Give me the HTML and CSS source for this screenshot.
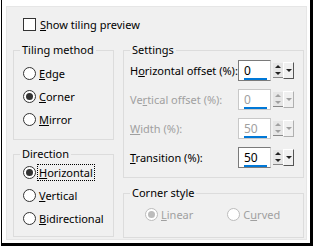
FILE: index.html
```html
<!DOCTYPE html>
<html lang="en">
<head>
    <meta charset="UTF-8">
    <title>Tiling</title>
    <link rel="stylesheet" href="styles.css">
</head>
<body>
    <div class="frame">
        <div class="panel">
            <label class="check-row">
                <span class="checkbox"></span>
                <span><u>S</u>how tiling preview</span>
            </label>

            <div class="columns">
                <div class="col">
                    <fieldset class="group">
                        <legend>Tiling method</legend>
                        <div class="group-body tiling">
                            <label class="radio-row"><span class="radio"></span><span><u>E</u>dge</span></label>
                            <label class="radio-row"><span class="radio checked"></span><span><u>C</u>orner</span></label>
                            <label class="radio-row"><span class="radio"></span><span><u>M</u>irror</span></label>
                        </div>
                    </fieldset>

                    <fieldset class="group direction">
                        <legend>Direction</legend>
                        <div class="group-body">
                            <label class="radio-row"><span class="radio checked"></span><span class="focus"><u>H</u>orizontal</span></label>
                            <label class="radio-row"><span class="radio"></span><span><u>V</u>ertical</span></label>
                            <label class="radio-row"><span class="radio"></span><span><u>B</u>idirectional</span></label>
                        </div>
                    </fieldset>
                </div>

                <div class="col">
                    <fieldset class="group">
                        <legend>Settings</legend>
                        <div class="group-body settings">
                            <div class="field-row">
                                <span class="field-label">H<u>o</u>rizontal offset (%):</span>
                                <div class="spin">
                                    <div class="spin-edit"><span>0</span></div>
                                    <div class="spin-arrows"><span class="up"></span><span class="down"></span></div>
                                    <div class="spin-drop"><span></span></div>
                                </div>
                            </div>
                            <div class="field-row disabled">
                                <span class="field-label">Ve<u>r</u>tical offset (%):</span>
                                <div class="spin">
                                    <div class="spin-edit"><span>0</span></div>
                                    <div class="spin-arrows"><span class="up"></span><span class="down"></span></div>
                                    <div class="spin-drop"><span></span></div>
                                </div>
                            </div>
                            <div class="field-row disabled">
                                <span class="field-label"><u>W</u>idth (%):</span>
                                <div class="spin">
                                    <div class="spin-edit"><span>50</span></div>
                                    <div class="spin-arrows"><span class="up"></span><span class="down"></span></div>
                                    <div class="spin-drop"><span></span></div>
                                </div>
                            </div>
                            <div class="field-row">
                                <span class="field-label"><u>T</u>ransition (%):</span>
                                <div class="spin">
                                    <div class="spin-edit"><span>50</span></div>
                                    <div class="spin-arrows"><span class="up"></span><span class="down"></span></div>
                                    <div class="spin-drop"><span></span></div>
                                </div>
                            </div>
                        </div>
                    </fieldset>

                    <fieldset class="group corner">
                        <legend>Corner style</legend>
                        <div class="group-body corner-row disabled">
                            <label class="radio-row linear"><span class="radio checked"></span><span><u>L</u>inear</span></label>
                            <label class="radio-row"><span class="radio"></span><span>C<u>u</u>rved</span></label>
                        </div>
                    </fieldset>
                </div>
            </div>
        </div>
    </div>
</body>
</html>
```

FILE: styles.css
```css
* {
    box-sizing: border-box;
}
body {
    margin: 0;
    background: #ffffff;
    font-family: "Noto Sans", "Open Sans", sans-serif;
    font-size: 11px;
    color: #000;
}
.frame {
    width: 312px;
    height: 246px;
    margin-left: 1px;
    border-left: 1px solid #000;
    border-right: 3px solid #000;
    border-bottom: 3px solid #000;
    padding: 6px 3px 3px 4px;
}
.panel {
    width: 301px;
    height: 234px;
    background: #f0f0f0;
    border: 1px solid #e6e6e6;
    padding: 0 0 0 6px;
}
u {
    text-decoration: underline;
    text-underline-offset: 1px;
}

/* checkbox */
.check-row {
    display: flex;
    align-items: center;
    gap: 4px;
    height: 15px;
    margin: 10px 0 0 10px;
    line-height: 15px;
}
.checkbox {
    width: 13px;
    height: 13px;
    border: 1px solid #333;
    background: #fff;
}

/* layout */
.columns {
    display: grid;
    grid-template-columns: 101px 181px;
    column-gap: 9px;
    margin-top: 11px;
}
.col {
    display: flex;
    flex-direction: column;
}

/* group boxes */
.group {
    margin: 0;
    border: 1px solid #dcdcdc;
    padding: 0;
    min-width: 0;
}
.group legend {
    margin-left: 6px;
    padding: 0 2px;
    line-height: 14px;
}
.group-body {
    padding: 0 0 6px 9px;
}
.tiling {
    padding: 5px 0 8px 9px;
}
.direction {
    margin-top: 7px;
}
.settings {
    padding: 3px 9px 9px 6px;
}
.corner {
    margin-top: 8px;
}

/* radios */
.radio-row {
    display: flex;
    align-items: center;
    gap: 3px;
    height: 23px;
    line-height: 15px;
}
.radio {
    flex: none;
    width: 13px;
    height: 13px;
    border: 1px solid #333;
    border-radius: 50%;
    background: #fff;
    display: flex;
    align-items: center;
    justify-content: center;
}
.radio.checked::after {
    content: "";
    width: 7px;
    height: 7px;
    border-radius: 50%;
    background: #333;
}
.focus {
    outline: 1px dotted #000;
    padding: 0 1px;
    margin-left: -1px;
}
.corner-row {
    display: flex;
    gap: 34px;
    padding: 3px 0 11px 21px;
}
.disabled {
    color: #a0a0a0;
}
.disabled .radio {
    border-color: #bcbcbc;
}
.disabled .radio.checked::after {
    background: #bcbcbc;
}

/* numeric fields */
.field-row {
    display: flex;
    align-items: center;
    justify-content: space-between;
    height: 21px;
    margin-bottom: 8px;
}
.field-row:last-child {
    margin-bottom: 0;
}
.field-label {
    white-space: nowrap;
}
.spin {
    display: flex;
    align-items: center;
    height: 21px;
}
.spin-edit {
    width: 33px;
    height: 21px;
    background: #fff;
    border: 1px solid #7a7a7a;
    border-right-color: #d0d0d0;
    padding: 2px 0 0 5px;
    line-height: 15px;
    font-size: 12px;
    position: relative;
}
.spin-edit::after {
    content: "";
    position: absolute;
    left: 5px;
    bottom: 0;
    width: 23px;
    height: 2px;
    background: #0078d7;
}
.spin-arrows {
    width: 10px;
    height: 15px;
    margin-left: 2px;
    display: flex;
    flex-direction: column;
    justify-content: space-between;
    align-items: center;
    background: #e6e6e6;
    border-bottom: 1px solid #888;
}
.spin-arrows span {
    width: 0;
    height: 0;
    border-left: 3px solid transparent;
    border-right: 3px solid transparent;
}
.spin-arrows .up {
    margin-top: 2px;
    border-bottom: 3px solid #222;
}
.spin-arrows .down {
    margin-bottom: 2px;
    border-top: 3px solid #222;
}
.spin-drop {
    width: 11px;
    height: 17px;
    border-top: 1px solid #fff;
    border-left: 1px solid #fff;
    border-right: 1px solid #555;
    border-bottom: 1px solid #555;
    display: flex;
    align-items: center;
    justify-content: center;
}
.spin-drop span {
    width: 0;
    height: 0;
    border-left: 3px solid transparent;
    border-right: 3px solid transparent;
    border-top: 3px solid #222;
}
.disabled .spin-edit {
    border-color: #c8c8c8;
}
.disabled .spin-arrows .up {
    border-bottom-color: #a0a0a0;
}
.disabled .spin-arrows .down,
.disabled .spin-drop span {
    border-top-color: #a0a0a0;
}
.disabled .spin-drop {
    border-right-color: #b0b0b0;
    border-bottom-color: #b0b0b0;
}
```
